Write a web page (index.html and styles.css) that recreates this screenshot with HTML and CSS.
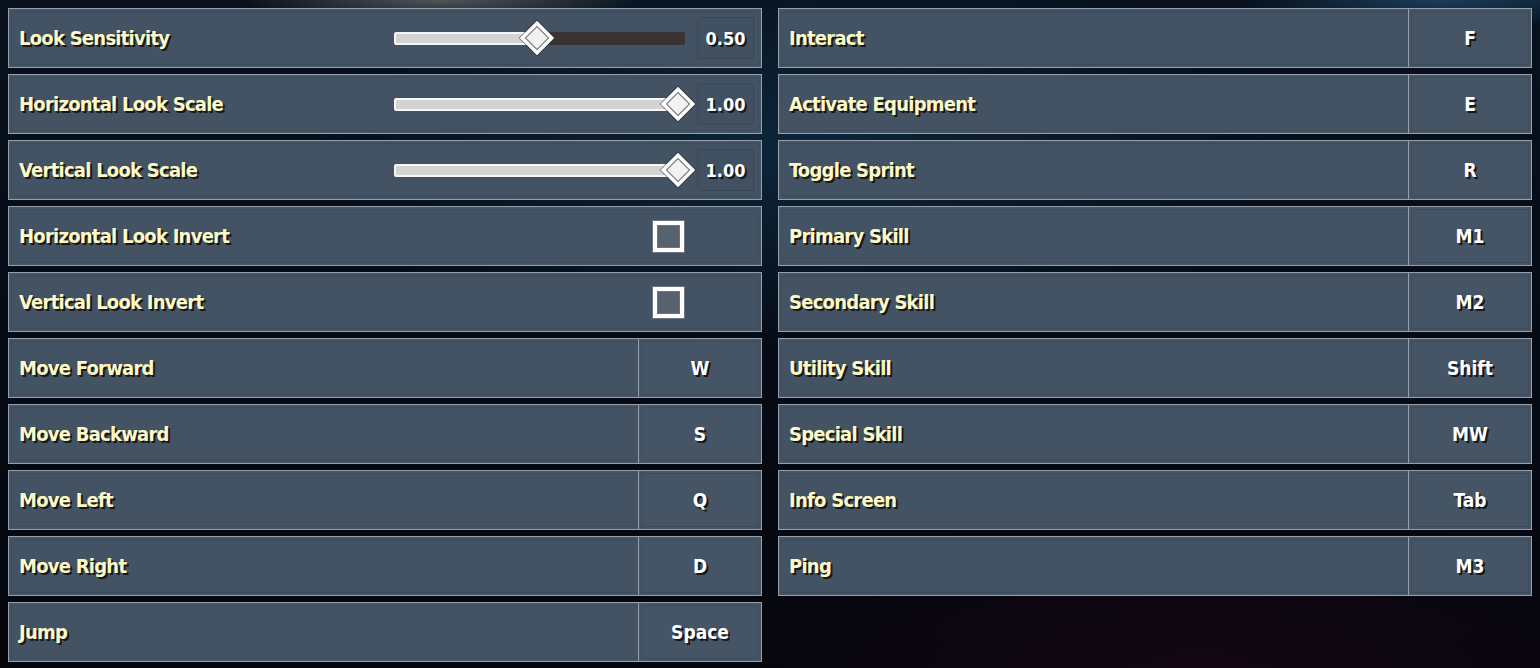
FILE: index.html
```html
<!DOCTYPE html>
<html>
<head>
<meta charset="utf-8">
<link rel="stylesheet" href="styles.css">
</head>
<body>
<div class="page">
  <div class="col">
    <div class="row">
      <div class="label fixed">Look Sensitivity</div>
      <div class="slider">
        <div class="track"><div class="fill" style="width:49%"></div><div class="thumb" style="left:49.3%"></div></div>
      </div>
      <div class="value">0.50</div>
    </div>
    <div class="row">
      <div class="label fixed">Horizontal Look Scale</div>
      <div class="slider">
        <div class="track"><div class="fill" style="width:100%"></div><div class="thumb" style="left:97.6%"></div></div>
      </div>
      <div class="value">1.00</div>
    </div>
    <div class="row">
      <div class="label fixed">Vertical Look Scale</div>
      <div class="slider">
        <div class="track"><div class="fill" style="width:100%"></div><div class="thumb" style="left:97.6%"></div></div>
      </div>
      <div class="value">1.00</div>
    </div>
    <div class="row">
      <div class="label">Horizontal Look Invert</div>
      <div class="check"></div>
    </div>
    <div class="row">
      <div class="label">Vertical Look Invert</div>
      <div class="check"></div>
    </div>
    <div class="row"><div class="label">Move Forward</div><div class="key">W</div></div>
    <div class="row"><div class="label">Move Backward</div><div class="key">S</div></div>
    <div class="row"><div class="label">Move Left</div><div class="key">Q</div></div>
    <div class="row"><div class="label">Move Right</div><div class="key">D</div></div>
    <div class="row"><div class="label">Jump</div><div class="key">Space</div></div>
  </div>
  <div class="col">
    <div class="row"><div class="label">Interact</div><div class="key">F</div></div>
    <div class="row"><div class="label">Activate Equipment</div><div class="key">E</div></div>
    <div class="row"><div class="label">Toggle Sprint</div><div class="key">R</div></div>
    <div class="row"><div class="label">Primary Skill</div><div class="key">M1</div></div>
    <div class="row"><div class="label">Secondary Skill</div><div class="key">M2</div></div>
    <div class="row"><div class="label">Utility Skill</div><div class="key">Shift</div></div>
    <div class="row"><div class="label">Special Skill</div><div class="key">MW</div></div>
    <div class="row"><div class="label">Info Screen</div><div class="key">Tab</div></div>
    <div class="row"><div class="label">Ping</div><div class="key">M3</div></div>
  </div>
</div>
</body>
</html>
```

FILE: styles.css
```css
html, body {
  margin: 0;
  height: 100%;
}
body {
  background:
    radial-gradient(ellipse 200px 22px at 440px 0px, rgba(130,130,130,0.6), transparent),
    radial-gradient(ellipse 200px 30px at 1440px 0px, rgba(40,90,130,0.6), transparent),
    radial-gradient(ellipse 500px 200px at 800px 150px, rgba(20,60,90,0.5), transparent),
    radial-gradient(ellipse 500px 160px at 1200px 668px, rgba(20,6,18,0.9), transparent),
    linear-gradient(180deg, #07111d 0%, #050a14 60%, #06060c 100%);
  font-family: "DejaVu Sans Condensed", "DejaVu Sans", sans-serif;
  font-stretch: condensed;
  font-weight: bold;
  overflow: hidden;
}
.page {
  display: flex;
  gap: 16px;
  padding: 8px;
}
.col {
  width: 754px;
  display: flex;
  flex-direction: column;
  gap: 6px;
}
.row {
  height: 60px;
  box-sizing: border-box;
  display: flex;
  align-items: stretch;
  border: 1px solid #95a0ab;
  background: #445363;
  box-shadow: inset 0 0 0 2px #465565, inset 0 0 0 3px #3d4b5a;
}
.label {
  flex: 1;
  display: flex;
  align-items: center;
  padding-left: 10px;
  color: #fdf9c6;
  font-size: 20px;
  letter-spacing: -0.75px;
  text-shadow: 2px 2px 0 #15171c;
}
.label.fixed {
  flex: none;
  width: 375px;
}
.slider {
  width: 291px;
  display: flex;
  align-items: center;
}
.track {
  position: relative;
  width: 100%;
  height: 13px;
  background: #3a3233;
  border-radius: 2px;
}
.fill {
  height: 100%;
  box-sizing: border-box;
  background: #d3d3d3;
  border: 2px solid #f6f6f6;
  border-radius: 2px;
}
.thumb {
  position: absolute;
  top: 50%;
  width: 24px;
  height: 24px;
  box-sizing: border-box;
  margin-left: -12px;
  margin-top: -12px;
  background: #f2f2f2;
  border: 3px solid #ffffff;
  box-shadow: inset 0 0 0 1.5px #8b8b8b, 0 0 0 1px rgba(40,40,40,0.5);
  transform: rotate(45deg);
}
.value {
  width: 57px;
  height: 42px;
  box-sizing: border-box;
  margin: auto 7px auto 12px;
  display: flex;
  align-items: center;
  justify-content: center;
  border: 1px solid #3a4755;
  border-radius: 3px;
  background: #425161;
  color: #ffffff;
  font-size: 18px;
  text-shadow: 2px 2px 0 #15171c;
}
.check {
  width: 31px;
  height: 31px;
  box-sizing: border-box;
  margin: auto 77px auto 0;
  border: 4px solid #ffffff;
  background: #56626e;
  box-shadow: 0 0 0 1px #6b7480, inset 0 0 0 1px #6b7480;
}
.key {
  width: 122px;
  display: flex;
  align-items: center;
  justify-content: center;
  border-left: 1px solid #95a0ab;
  color: #ffffff;
  font-size: 19px;
  text-shadow: 2px 2px 0 #15171c;
  box-shadow: inset 0 0 0 2px #465565, inset 0 0 0 3px #3d4b5a;
  background: #465566;
}
```
